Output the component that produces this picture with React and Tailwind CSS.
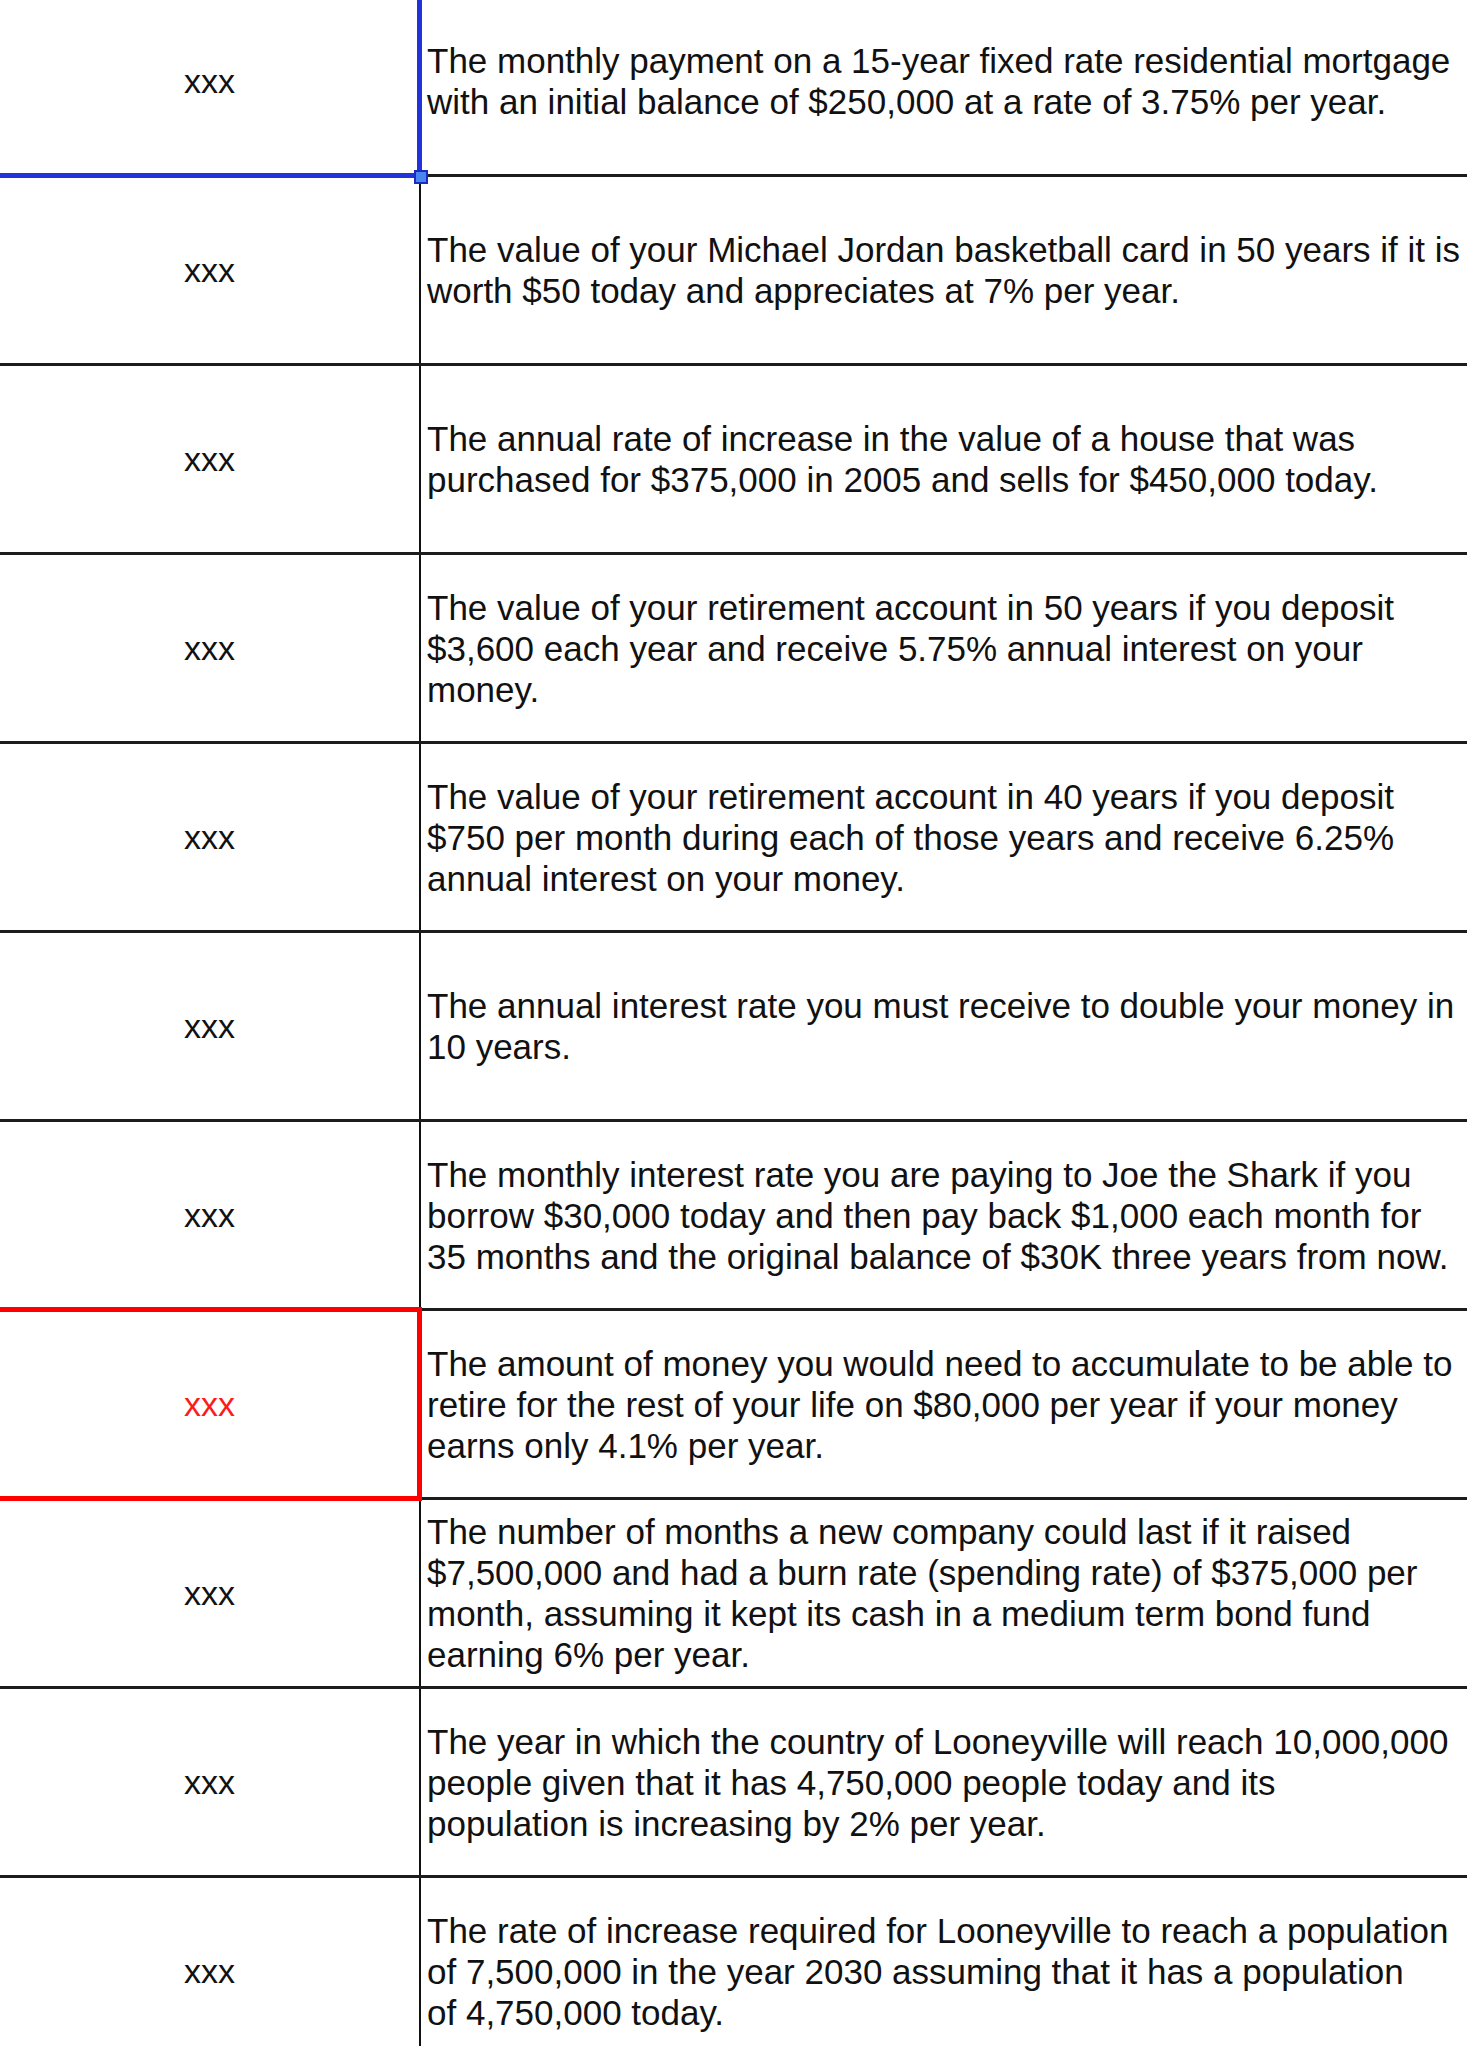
const rows = [
  {
    lines: [
      'The monthly payment on a 15-year fixed rate residential mortgage',
      'with an initial balance of $250,000 at a rate of 3.75% per year.',
    ],
    mark: 'blue',
  },
  {
    lines: [
      'The value of your Michael Jordan basketball card in 50 years if it is',
      'worth $50 today and appreciates at 7% per year.',
    ],
  },
  {
    lines: [
      'The annual rate of increase in the value of a house that was',
      'purchased for $375,000 in 2005 and sells for $450,000 today.',
    ],
  },
  {
    lines: [
      'The value of your retirement account in 50 years if you deposit',
      '$3,600 each year and receive 5.75% annual interest on your',
      'money.',
    ],
  },
  {
    lines: [
      'The value of your retirement account in 40 years if you deposit',
      '$750 per month during each of those years and receive 6.25%',
      'annual interest on your money.',
    ],
  },
  {
    lines: [
      'The annual interest rate you must receive to double your money in',
      '10 years.',
    ],
  },
  {
    lines: [
      'The monthly interest rate you are paying to Joe the Shark if you',
      'borrow $30,000 today and then pay back $1,000 each month for',
      '35 months and the original balance of $30K three years from now.',
    ],
  },
  {
    lines: [
      'The amount of money you would need to accumulate to be able to',
      'retire for the rest of your life on $80,000 per year if your money',
      'earns only 4.1% per year.',
    ],
    mark: 'red',
  },
  {
    lines: [
      'The number of months a new company could last if it raised',
      '$7,500,000 and had a burn rate (spending rate) of $375,000 per',
      'month, assuming it kept its cash in a medium term bond fund',
      'earning 6% per year.',
    ],
  },
  {
    lines: [
      'The year in which the country of Looneyville will reach 10,000,000',
      'people given that it has 4,750,000 people today and its',
      'population is increasing by 2% per year.',
    ],
  },
  {
    lines: [
      'The rate of increase required for Looneyville to reach a population',
      'of 7,500,000 in the year 2030 assuming that it has a population',
      'of 4,750,000 today.',
    ],
  },
];

function Row({ row }) {
  return (
    <div className="flex h-[189px] border-b-[3px] border-[#1c1c1c]">
      <div className="relative flex w-[419px] shrink-0 items-center justify-center">
        <span
          className={
            row.mark === 'red'
              ? 'text-[34px] text-[#ff1a1a]'
              : 'text-[34px] text-[#111]'
          }
        >
          xxx
        </span>
        {row.mark === 'blue' && (
          <>
            <div className="pointer-events-none absolute -bottom-[4px] left-0 right-[-3px] top-0 border-b-[5px] border-r-[5px] border-[#2233dd]" />
            <div className="absolute -bottom-[10px] -right-[9px] h-[14px] w-[14px] border-2 border-[#1a2bc0] bg-[#4a86f2]" />
          </>
        )}
        {row.mark === 'red' && (
          <div className="pointer-events-none absolute -bottom-[4px] -top-[4px] left-0 right-[-3px] border-y-[5px] border-r-[5px] border-[#ff0000]" />
        )}
      </div>
      <div className="flex flex-1 flex-col justify-center border-l-2 border-[#111] pl-[6px] text-[35px] leading-[41px] text-[#111]">
        {row.lines.map((l) => (
          <div key={l} className="whitespace-nowrap">
            {l}
          </div>
        ))}
      </div>
    </div>
  );
}

export default function App() {
  return (
    <div
      className="h-[2046px] w-[1467px] overflow-hidden bg-white"
      style={{ fontFamily: '"Liberation Sans", Arial, sans-serif' }}
    >
      <div className="-mt-[12px]">
        {rows.map((r, i) => (
          <Row key={i} row={r} />
        ))}
      </div>
    </div>
  );
}
